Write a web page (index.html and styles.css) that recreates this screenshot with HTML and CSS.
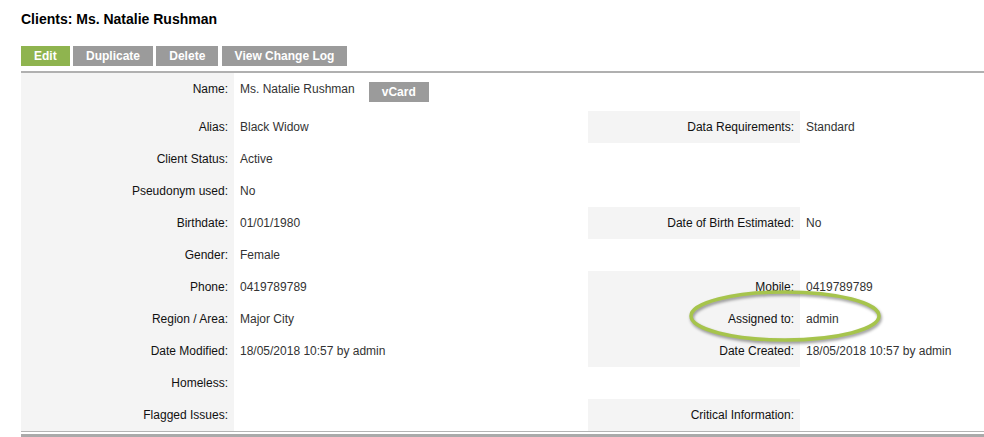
FILE: index.html
```html
<!DOCTYPE html>
<html lang="en">
<head>
  <meta charset="UTF-8">
  <title>Clients: Ms. Natalie Rushman</title>
  <link rel="stylesheet" href="styles.css">
</head>
<body>
  <div class="page">
    <h1 class="page-title">Clients: Ms. Natalie Rushman</h1>

    <div class="toolbar">
      <a class="btn btn-green" href="#">Edit</a>
      <a class="btn" href="#">Duplicate</a>
      <a class="btn" href="#">Delete</a>
      <a class="btn" href="#">View Change Log</a>
    </div>

    <table class="details">
      <colgroup>
        <col class="c-label">
        <col class="c-value">
        <col class="c-label2">
        <col>
      </colgroup>
      <tr class="row-name">
        <th>Name:</th>
        <td><div class="name-cell"><span>Ms. Natalie Rushman</span><a class="btn btn-small" href="#">vCard</a></div></td>
        <td class="blank"></td>
        <td></td>
      </tr>
      <tr>
        <th>Alias:</th>
        <td>Black Widow</td>
        <th>Data Requirements:</th>
        <td>Standard</td>
      </tr>
      <tr>
        <th>Client Status:</th>
        <td>Active</td>
        <td class="blank"></td>
        <td></td>
      </tr>
      <tr>
        <th>Pseudonym used:</th>
        <td>No</td>
        <td class="blank"></td>
        <td></td>
      </tr>
      <tr>
        <th>Birthdate:</th>
        <td>01/01/1980</td>
        <th>Date of Birth Estimated:</th>
        <td>No</td>
      </tr>
      <tr>
        <th>Gender:</th>
        <td>Female</td>
        <td class="blank"></td>
        <td></td>
      </tr>
      <tr>
        <th>Phone:</th>
        <td>0419789789</td>
        <th>Mobile:</th>
        <td>0419789789</td>
      </tr>
      <tr>
        <th>Region / Area:</th>
        <td>Major City</td>
        <th class="marked">Assigned to:
          <svg class="circle" width="200" height="58" viewBox="0 0 200 58" aria-hidden="true">
            <ellipse cx="97" cy="27" rx="94" ry="24" fill="none" stroke="#a6c44c" stroke-width="3.5"/>
          </svg>
        </th>
        <td>admin</td>
      </tr>
      <tr>
        <th>Date Modified:</th>
        <td>18/05/2018 10:57 by admin</td>
        <th>Date Created:</th>
        <td>18/05/2018 10:57 by admin</td>
      </tr>
      <tr>
        <th>Homeless:</th>
        <td></td>
        <td class="blank"></td>
        <td></td>
      </tr>
      <tr>
        <th>Flagged Issues:</th>
        <td></td>
        <th>Critical Information:</th>
        <td></td>
      </tr>
    </table>
    <div class="details-end"></div>
  </div>
</body>
</html>
```

FILE: styles.css
```css
/* Page */
body {
  margin: 0;
  font-family: "Liberation Sans", Arial, sans-serif;
  font-size: 12px;
  color: #333;
  background: #fff;
}
.page {
  padding-left: 21px;
}
.page-title {
  margin: 11px 0 19px;
  font-size: 14px;
  line-height: 16px;
  font-weight: bold;
  color: #000;
}

/* Buttons */
.toolbar {
  display: flex;
  gap: 3.3px;
  margin-bottom: 5px;
}
.btn {
  display: inline-block;
  height: 20px;
  line-height: 20px;
  padding: 0 13px;
  background-color: #9b9b9b;
  color: #fff;
  font-weight: bold;
  font-size: 12px;
  text-decoration: none;
}
.btn-green { background-color: #8fb44f; }
.btn-small {
  width: 60px;
  padding: 0;
  text-align: center;
  margin-top: 1px;
}

/* Detail table */
.details {
  width: 100%;
  border-collapse: collapse;
  table-layout: fixed;
  border-top: 2px solid #b0b0b0;
  border-bottom: 1px solid #b4b4b4;
}
.details col.c-label { width: 213px; }
.details col.c-value { width: 354px; }
.details col.c-label2 { width: 212px; }
.details th,
.details td {
  height: 32px;
  padding: 0 6px;
  vertical-align: middle;
  white-space: nowrap;
}
.details th {
  background-color: #f4f4f4;
  color: #111;
  font-weight: normal;
  text-align: right;
}
.details td { color: #333; }
.details td.blank { background: none; }

.details .row-name th,
.details .row-name td {
  height: 38px;
  padding-top: 8px;
  padding-bottom: 9px;
  vertical-align: top;
  line-height: 16px;
  box-sizing: border-box;
}
.name-cell {
  display: flex;
  align-items: flex-start;
  gap: 14px;
}

/* Annotation ring */
.details th.marked { position: relative; }
.circle {
  position: absolute;
  left: 100px;
  top: -14px;
  overflow: visible;
  filter: drop-shadow(1px 2px 1.5px rgba(0, 0, 0, 0.4));
  pointer-events: none;
}

.details-end {
  margin-top: 2px;
  border-top: 3px solid #aaa;
}
```
